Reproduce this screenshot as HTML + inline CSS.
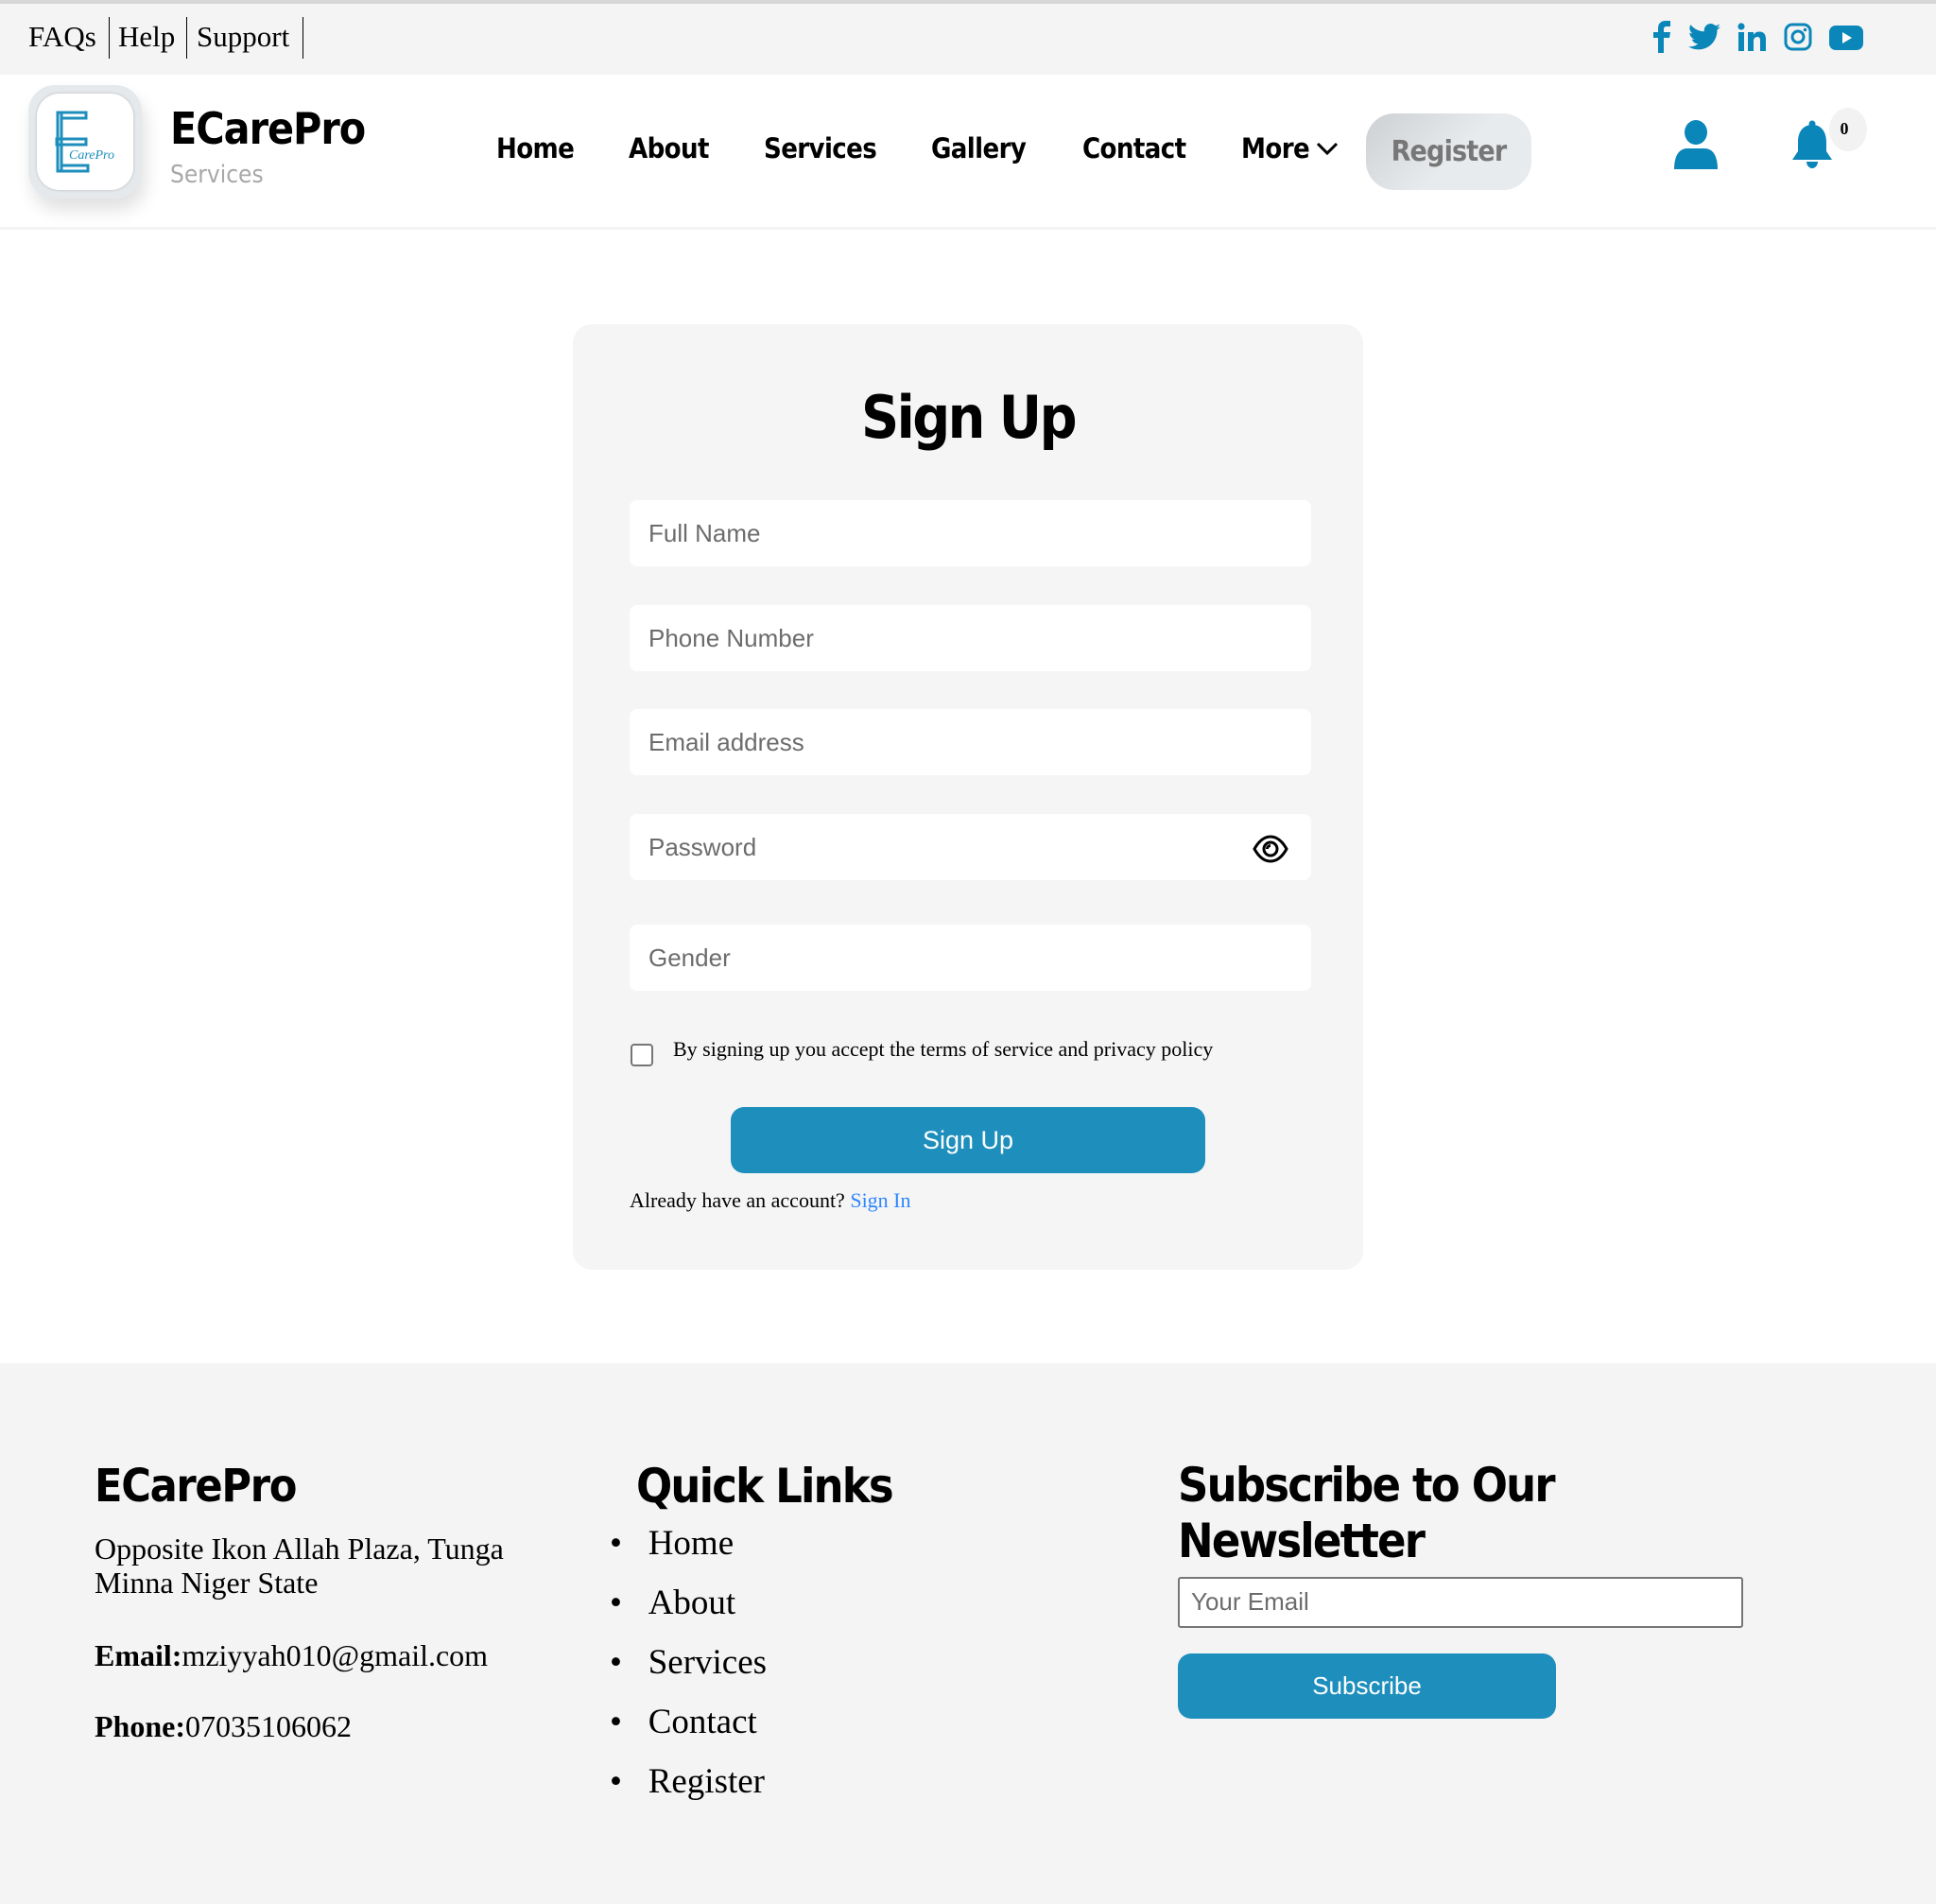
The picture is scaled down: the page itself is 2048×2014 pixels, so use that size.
<!DOCTYPE html>
<html><head><meta charset="utf-8">
<style>
*{margin:0;padding:0;box-sizing:border-box}
body{width:2048px;height:2014px;position:relative;background:#fff;overflow:hidden;font-family:"Liberation Serif",serif;color:#000}
.a{position:absolute;white-space:nowrap}
.h{font-family:"DejaVu Sans Condensed","DejaVu Sans",sans-serif;font-weight:bold;font-stretch:condensed}
.ser{font-family:"Liberation Serif",serif}
.ar{font-family:"Liberation Sans",Arial,sans-serif}
.inp{position:absolute;left:666px;width:721px;height:70px;background:#fff;border-radius:8px}
.ph{position:absolute;left:20px;top:0;line-height:70px;font-family:"Liberation Sans",sans-serif;font-size:26px;color:#6c6c6c}
.btn{position:absolute;background:#1e8fbd;border-radius:14px;color:#fff;font-family:"Liberation Sans",sans-serif;text-align:center}
</style></head><body>
<div class="a" style="left:0;top:0;width:2048px;height:4px;background:#d6d6d6"></div>
<div class="a" style="left:0;top:4px;width:2048px;height:75px;background:#f4f4f4"></div>
<div class="a ser" style="left:30px;top:17px;font-size:31px;line-height:44px">FAQs</div>
<div class="a" style="left:115px;top:18px;width:1px;height:44px;background:#000"></div>
<div class="a ser" style="left:125px;top:17px;font-size:31px;line-height:44px">Help</div>
<div class="a" style="left:197px;top:18px;width:1px;height:44px;background:#000"></div>
<div class="a ser" style="left:208px;top:17px;font-size:31px;line-height:44px">Support</div>
<div class="a" style="left:320px;top:18px;width:1px;height:44px;background:#000"></div>
<svg class="a" style="left:1745px;top:22px" width="26" height="34" viewBox="0 0 26 34"><path d="M9 34V18H4v-6h5V8c0-5 3-8 8-8h5v6h-4c-2 0-3 1-3 3v3h7l-1 6h-6v16z" fill="#0a86b8"/></svg>
<svg class="a" style="left:1786px;top:24px" width="34" height="30" viewBox="0 0 24 20"><path d="M24 2.4c-.9.4-1.800.7-2.8.8 1-.6 1.8-1.600 2.2-2.7-1 .6-2 1-3.100 1.200A4.900 4.900 0 0 0 11.900 6 14 14 0 0 1 1.700.9a4.900 4.900 0 0 0 1.500 6.600c-.8 0-1.600-.3-2.200-.6 0 2.400 1.700 4.400 3.900 4.800-.7.200-1.500.200-2.200.1.600 2 2.400 3.400 4.600 3.400A9.900 9.900 0 0 1 0 17.200 14 14 0 0 0 7.500 19.400c9.100 0 14-7.500 14-14v-.6c1-.7 1.800-1.600 2.500-2.400z" fill="#0a86b8"/></svg>
<svg class="a" style="left:1838px;top:24px" width="30" height="30" viewBox="0 0 30 30"><rect x="1" y="10" width="6" height="20" fill="#0a86b8"/><circle cx="4" cy="4" r="3.6" fill="#0a86b8"/><path d="M11 10h6v3c1-2 3-3.5 6-3.5 5 0 7 3 7 8V30h-6V19c0-3-1-4-3-4s-4 1.5-4 4.5V30h-6z" fill="#0a86b8"/></svg>
<svg class="a" style="left:1887px;top:24px" width="30" height="30" viewBox="0 0 30 30"><rect x="2" y="2" width="26" height="26" rx="7" fill="none" stroke="#0a86b8" stroke-width="3"/><circle cx="15" cy="15" r="6" fill="none" stroke="#0a86b8" stroke-width="3"/><circle cx="22.5" cy="7.5" r="1.8" fill="#0a86b8"/></svg>
<svg class="a" style="left:1935px;top:27px" width="36" height="26" viewBox="0 0 36 26"><rect x="0" y="0" width="36" height="26" rx="7" fill="#0a86b8"/><path d="M14 7v12l10-6z" fill="#fff"/></svg>
<div class="a" style="left:0;top:240px;width:2048px;height:3px;background:#f4f4f4"></div>
<div class="a" style="left:30px;top:90px;width:120px;height:120px;border-radius:28px;background:#e6e9ec;box-shadow:4px 12px 18px rgba(0,0,0,.12)"></div>
<div class="a" style="left:39px;top:99px;width:102px;height:102px;border-radius:24px;background:#fff;box-shadow:0 0 3px rgba(0,0,0,.2)"></div>
<svg class="a" style="left:56px;top:115px" width="80" height="70" viewBox="0 0 80 70">
<g fill="none" stroke="#1e8fbd" stroke-width="3"><rect x="5" y="4" width="4" height="62"/><rect x="9" y="4" width="26" height="6"/><rect x="4" y="32" width="31" height="6"/><rect x="9" y="60" width="28" height="6"/></g>
<text x="17" y="53" font-family="Liberation Serif" font-style="italic" font-size="14" fill="#1e8fbd">CarePro</text></svg>
<div class="a h" style="left:180px;top:106px;font-size:46px;line-height:60px;letter-spacing:-1px">ECarePro</div>
<div class="a" style="left:180px;top:168px;font-size:26px;line-height:34px;color:#a8a8a8;font-family:'DejaVu Sans Condensed','DejaVu Sans',sans-serif">Services</div>
<div class="a h" style="left:525px;top:139px;font-size:29px;line-height:36px;letter-spacing:-.6px">Home</div>
<div class="a h" style="left:665px;top:139px;font-size:29px;line-height:36px;letter-spacing:-.6px">About</div>
<div class="a h" style="left:808px;top:139px;font-size:29px;line-height:36px;letter-spacing:-.6px">Services</div>
<div class="a h" style="left:985px;top:139px;font-size:29px;line-height:36px;letter-spacing:-.6px">Gallery</div>
<div class="a h" style="left:1145px;top:139px;font-size:29px;line-height:36px;letter-spacing:-.6px">Contact</div>
<div class="a h" style="left:1313px;top:139px;font-size:29px;line-height:36px;letter-spacing:-.6px">More</div>
<svg class="a" style="left:1392px;top:149px" width="24" height="16" viewBox="0 0 24 16"><path d="M2 3l10 10L22 3" fill="none" stroke="#000" stroke-width="3"/></svg>
<div class="a" style="left:1445px;top:120px;width:175px;height:81px;border-radius:30px;background:linear-gradient(135deg,#cdd0d3,#e8ebee 55%);"></div>
<div class="a h" style="left:1445px;top:142px;width:175px;text-align:center;font-size:30px;line-height:38px;color:#777;letter-spacing:-.8px">Register</div>
<svg class="a" style="left:1771px;top:127px" width="46" height="52" viewBox="0 0 46 52"><ellipse cx="23" cy="13" rx="12" ry="13" fill="#0a86b8"/><path d="M0 52c0-14 5-22 14-22h18c9 0 14 8 14 22z" fill="#0a86b8"/></svg>
<svg class="a" style="left:1893px;top:127px" width="48" height="52" viewBox="0 0 48 52"><circle cx="24" cy="4" r="3.5" fill="#0a86b8"/><path d="M24 5c-10 0-15 8-15 18v10l-6 9h42l-6-9V23c0-10-5-18-15-18z" fill="#0a86b8"/><path d="M18 44h12c0 4-3 7-6 7s-6-3-6-7z" fill="#0a86b8"/></svg>
<div class="a" style="left:1935px;top:114px;width:40px;height:46px;border-radius:50%;background:#f2f2f2"></div>
<div class="a ser" style="left:1931px;top:124px;width:40px;text-align:center;font-size:18px;line-height:24px;font-weight:bold">0</div>
<div class="a" style="left:606px;top:343px;width:836px;height:1000px;border-radius:20px;background:#f5f5f5"></div>
<div class="a h" style="left:606px;top:402px;width:836px;text-align:center;font-size:62px;line-height:80px;letter-spacing:-2.5px">Sign Up</div>
<div class="inp" style="top:529px"><div class="ph">Full Name</div></div>
<div class="inp" style="top:640px"><div class="ph">Phone Number</div></div>
<div class="inp" style="top:750px"><div class="ph">Email address</div></div>
<div class="inp" style="top:861px"><div class="ph">Password</div>
<svg class="a" style="left:659px;top:22px" width="38" height="30" viewBox="0 0 38 30"><path d="M2 15C7 6 13 2 19 2s12 4 17 13c-5 9-11 13-17 13S7 24 2 15z" fill="none" stroke="#000" stroke-width="3"/><circle cx="19" cy="15" r="7" fill="none" stroke="#000" stroke-width="3"/><path d="M19 10a5 5 0 0 0-5 5h3a2 2 0 0 1 2-2z" fill="#000"/></svg></div>
<div class="inp" style="top:978px"><div class="ph">Gender</div></div>
<div class="a" style="left:667px;top:1104px;width:24px;height:24px;border:2px solid #767676;border-radius:4px;background:#fff"></div>
<div class="a ser" style="left:712px;top:1096px;font-size:22px;line-height:28px">By signing up you accept the terms of service and privacy policy</div>
<div class="btn" style="left:773px;top:1171px;width:502px;height:70px;line-height:70px;font-size:27px">Sign Up</div>
<div class="a ser" style="left:666px;top:1256px;font-size:22px;line-height:28px">Already have an account? <span style="color:#2f86ff">Sign In</span></div>
<div class="a" style="left:0;top:1442px;width:2048px;height:572px;background:#f4f4f4"></div>
<div class="a h" style="left:100px;top:1542px;font-size:48px;line-height:60px;letter-spacing:-1.3px">ECarePro</div>
<div class="a ser" style="left:100px;top:1620px;font-size:32px;line-height:36px">Opposite Ikon Allah Plaza, Tunga<br>Minna Niger State</div>
<div class="a ser" style="left:100px;top:1733px;font-size:32px;line-height:36px"><b>Email:</b>mziyyah010@gmail.com</div>
<div class="a ser" style="left:100px;top:1808px;font-size:32px;line-height:36px"><b>Phone:</b>07035106062</div>
<div class="a h" style="left:673px;top:1542px;font-size:50px;line-height:60px;letter-spacing:-1.8px">Quick Links</div>
<div class="a ser" style="left:645px;top:1601px;font-size:37px;line-height:63px">
<div>•&nbsp;&nbsp;&nbsp;Home</div><div>•&nbsp;&nbsp;&nbsp;About</div><div>•&nbsp;&nbsp;&nbsp;Services</div><div>•&nbsp;&nbsp;&nbsp;Contact</div><div>•&nbsp;&nbsp;&nbsp;Register</div></div>
<div class="a h" style="left:1246px;top:1542px;font-size:50px;line-height:59px;letter-spacing:-1.8px">Subscribe to Our<br>Newsletter</div>
<div class="a" style="left:1246px;top:1668px;width:598px;height:54px;background:#fff;border:2px solid #767676;border-radius:3px"></div>
<div class="a ar" style="left:1260px;top:1667px;font-size:26px;line-height:54px;color:#6c6c6c">Your Email</div>
<div class="btn" style="left:1246px;top:1749px;width:400px;height:69px;line-height:69px;font-size:26px">Subscribe</div>
</body></html>
